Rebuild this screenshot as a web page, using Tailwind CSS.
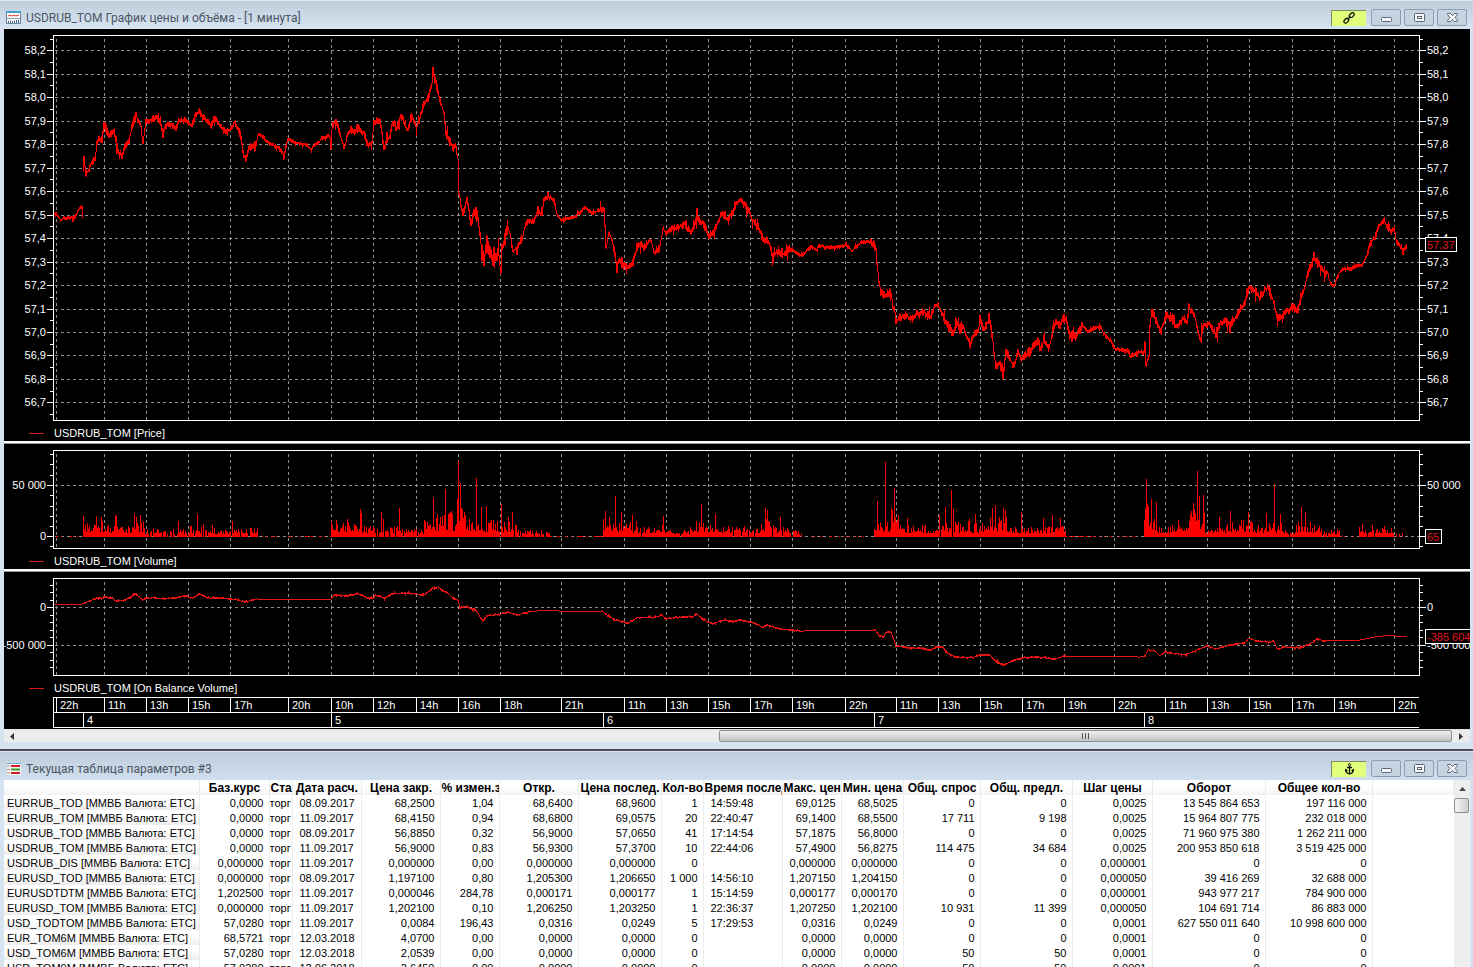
<!DOCTYPE html>
<html lang="ru">
<head>
  <meta charset="UTF-8" />
  <meta name="viewport" content="width=device-width, initial-scale=1.0"/>
  <title>USDRUB_TOM График цены и объёма</title>
  <script src="https://cdn.jsdelivr.net/npm/@tailwindcss/browser@4"></script>
</head>
<body class="h-screen flex flex-col overflow-hidden bg-[#d6e3f1] font-['Liberation_Sans',Arial,sans-serif] text-[11px] text-black">

  <!-- chart window -->
  <section class="border-t border-[#e4edf6] pb-[7px]">
    <header class="h-7 flex items-center gap-[5px] pl-1.5 pr-1.5 pt-[5px] bg-linear-to-b from-[#bfcddb] to-[#d7e4f2]">
      <svg class="w-[15px] h-[13px] shrink-0" viewBox="0 0 15 13">
        <rect x=".5" y=".5" width="14" height="12" fill="#fff" stroke="#6d86a0"/>
        <path d="M0 1h15" stroke="#3f9fd0" stroke-width="2"/>
        <path d="M2 5l2-1 2 1 2-1 2 1 3-1" fill="none" stroke="#c33"/>
        <path d="M1 7.5h13" stroke="#8aa0b5"/>
        <path d="M2.500 12v-2M4.500 12V9.500M6.500 12v-2M8.500 12V9.500M10.500 12v-3M12.500 12v-3" stroke="#445f80"/>
      </svg>
      <h1 class="flex-1 truncate font-[Roboto,'Noto_Sans',sans-serif] text-xs text-[#4b5563]">USDRUB_TOM График цены и объёма - [1 минута]</h1>
      <div class="flex items-center gap-[3px]">
        <button type="button" aria-label="Связать" class="w-[35px] h-4 mr-0.5 flex items-center justify-center bg-[#e1ff7b] border-t border-l border-[#7e8b62]">
          <svg class="w-3 h-3" viewBox="0 0 12 12" fill="none" stroke="#111" stroke-width="1.300">
            <rect x="6" y="1.500" width="5.500" height="3.400" rx="1.700" transform="rotate(-45 8.700 3.200)"/>
            <rect x=".6" y="7" width="5.500" height="3.400" rx="1.700" transform="rotate(-45 3.300 8.700)"/>
            <path d="M4.500 7.500l3-3"/>
          </svg>
        </button>
        <button type="button" aria-label="Свернуть" class="w-[30px] h-[17px] flex items-center justify-center rounded-xs border border-[#8c9db0] bg-[#c6d3e1]">
          <svg class="w-[11px] h-[9px]" viewBox="0 0 11 9"><rect x=".5" y="4.500" width="10" height="4" rx="1" fill="#f5f7fa" stroke="#5a6472"/></svg>
        </button>
        <button type="button" aria-label="Развернуть" class="w-[30px] h-[17px] flex items-center justify-center rounded-xs border border-[#8c9db0] bg-[#c6d3e1]">
          <svg class="w-[11px] h-[9px]" viewBox="0 0 11 9"><rect x=".5" y=".5" width="10" height="8" rx="1" fill="#f5f7fa" stroke="#5a6472"/><rect x="3.500" y="3.500" width="4" height="2" fill="#fff" stroke="#5a6472"/></svg>
        </button>
        <button type="button" aria-label="Закрыть" class="w-[30px] h-[17px] flex items-center justify-center rounded-xs border border-[#8c9db0] bg-[#c6d3e1]">
          <svg class="w-[11px] h-[9px]" viewBox="0 0 11 9"><path d="M.5.500h3l2 2.200 2-2.200h3v1L8 4.500l2.500 3v1h-3l-2-2.200-2 2.200h-3v-1L3 4.500.5 1.500z" fill="#f5f7fa" stroke="#5a6472"/></svg>
        </button>
      </div>
    </header>

    <div class="ml-1 mr-[3px]">
      <div class="bg-black text-white">
        <div class="flex pt-1.5" id="price"></div>
        <div class="h-5 pt-1 pl-[25px] flex items-center"><i class="w-[15px] h-px mr-2.5 bg-[#d01818]"></i>USDRUB_TOM [Price]</div>
      </div>
      <div class="h-[3px] bg-white border-b border-[#9a9a9a]"></div>
      <div class="bg-black text-white">
        <div class="flex pt-1.5" id="volume"></div>
        <div class="h-5 pt-1 pl-[25px] flex items-center"><i class="w-[15px] h-px mr-2.5 bg-[#d01818]"></i>USDRUB_TOM [Volume]</div>
      </div>
      <div class="h-[3px] bg-white border-b border-[#9a9a9a]"></div>
      <div class="bg-black text-white pb-px">
        <div class="flex pt-1.5" id="obv"></div>
        <div class="h-[21px] pt-1 pl-[25px] flex items-center"><i class="w-[15px] h-px mr-2.5 bg-[#d01818]"></i>USDRUB_TOM [On Balance Volume]</div>
        <div class="ml-[49px] mr-[51px] border-y border-l border-white">
          <div id="hours" class="h-[15px] leading-[14px] grid grid-cols-[2fr_48fr_42fr_42fr_42fr_58fr_43fr_42fr_43fr_42fr_42fr_61fr_63fr_42fr_42fr_42fr_42fr_53fr_51fr_42fr_42fr_42fr_42fr_50fr_51fr_42fr_42fr_43fr_42fr_60fr_25fr] border-b border-white"></div>
          <div id="days" class="h-3.5 leading-[14px] grid grid-cols-[29fr_248fr_272fr_271fr_270fr_275fr]"></div>
        </div>
      </div>
      <div class="h-3 mt-px flex items-center bg-[#ececec]">
        <button type="button" aria-label="Влево" class="w-4 h-3 flex items-center justify-center"><svg class="w-1 h-[7px]" viewBox="0 0 4 7"><path d="M4 0v7L0 3.500z" fill="#333"/></svg></button>
        <div class="flex-1 h-full flex justify-end">
          <div class="w-[51.2%] h-full flex items-center justify-center gap-0.5 rounded-xs border border-[#8f8f8f] bg-linear-to-b from-[#f1f1f1] to-[#c2c2c5]">
            <i class="w-px h-1.5 bg-[#555]"></i><i class="w-px h-1.5 bg-[#555]"></i><i class="w-px h-1.5 bg-[#555]"></i>
          </div>
        </div>
        <button type="button" aria-label="Вправо" class="w-[18px] h-3 flex items-center justify-center"><svg class="w-1 h-[7px]" viewBox="0 0 4 7"><path d="M0 0v7l4-3.500z" fill="#333"/></svg></button>
      </div>
    </div>
  </section>

  <!-- quotes window -->
  <section class="flex-1 min-h-0 flex flex-col border-t-2 border-[#4c5058]">
    <header class="h-[29px] shrink-0 flex items-center gap-[5px] pl-[7px] pr-1.5 pt-[5px] border-t border-[#dbe6f1] bg-linear-to-b from-[#bfcddb] to-[#d0dfee]">
      <svg class="w-3.5 h-3 shrink-0" viewBox="0 0 14 12">
        <path d="M0 0h14v12H0z" fill="#f4f4f4"/>
        <path d="M0 .5h14" stroke="#6ab0d8"/>
        <path d="M0 3h3M0 6.500h3M0 10h3" stroke="#c08878"/>
        <path d="M4 3h9M4 10h9" stroke="#d0202c" stroke-width="2"/>
        <path d="M4 6.500h9" stroke="#3a9a30" stroke-width="2"/>
      </svg>
      <h2 class="flex-1 truncate font-[Roboto,'Noto_Sans',sans-serif] text-xs text-[#4b5563]">Текущая таблица параметров #3</h2>
      <div class="flex items-center gap-[3px]">
        <button type="button" aria-label="Закрепить" class="w-[35px] h-4 mr-0.5 flex items-center justify-center bg-[#e1ff7b] border-t border-l border-[#7e8b62]">
          <svg class="w-[9px] h-3" viewBox="0 0 9 12" fill="none" stroke="#111">
            <circle cx="4.500" cy="1.600" r="1.100"/>
            <path d="M4.500 2.700V11M2 4.500h5" stroke-width="1.300"/>
            <path d="M.7 6.500c0 2.500 1.300 4 3.800 4.500 2.500-.5 3.800-2 3.800-4.500M0 8.200l.8-1.700L2.300 8M9 8.200l-.8-1.700L6.700 8" stroke-width="1.200"/>
          </svg>
        </button>
        <button type="button" aria-label="Свернуть" class="w-[30px] h-[17px] flex items-center justify-center rounded-xs border border-[#8c9db0] bg-[#c6d3e1]">
          <svg class="w-[11px] h-[9px]" viewBox="0 0 11 9"><rect x=".5" y="4.500" width="10" height="4" rx="1" fill="#f5f7fa" stroke="#5a6472"/></svg>
        </button>
        <button type="button" aria-label="Развернуть" class="w-[30px] h-[17px] flex items-center justify-center rounded-xs border border-[#8c9db0] bg-[#c6d3e1]">
          <svg class="w-[11px] h-[9px]" viewBox="0 0 11 9"><rect x=".5" y=".5" width="10" height="8" rx="1" fill="#f5f7fa" stroke="#5a6472"/><rect x="3.500" y="3.500" width="4" height="2" fill="#fff" stroke="#5a6472"/></svg>
        </button>
        <button type="button" aria-label="Закрыть" class="w-[30px] h-[17px] flex items-center justify-center rounded-xs border border-[#8c9db0] bg-[#c6d3e1]">
          <svg class="w-[11px] h-[9px]" viewBox="0 0 11 9"><path d="M.5.500h3l2 2.200 2-2.200h3v1L8 4.500l2.500 3v1h-3l-2-2.200-2 2.200h-3v-1L3 4.500.5 1.500z" fill="#f5f7fa" stroke="#5a6472"/></svg>
        </button>
      </div>
    </header>
    <div class="flex-1 min-h-0 ml-1 mr-[3px] flex bg-white overflow-hidden">
      <div class="flex-1 min-w-0 overflow-hidden">
        <table class="w-full table-fixed border-collapse whitespace-nowrap">
          <colgroup>
            <col class="w-[195px]"><col class="w-[70px]"><col class="w-[23px]"><col class="w-[69px]"><col class="w-[79px]"><col class="w-[59px]">
            <col class="w-[79px]"><col class="w-[83px]"><col class="w-[42px]"><col class="w-[79px]"><col class="w-[59px]"><col class="w-[62px]">
            <col class="w-[77px]"><col class="w-[92px]"><col class="w-[80px]"><col class="w-[113px]"><col class="w-[107px]"><col>
          </colgroup>
          <thead><tr id="head" class="bg-linear-to-b from-white via-white to-[#f1f2f4]"></tr></thead>
          <tbody id="rows"></tbody>
        </table>
      </div>
      <div class="w-4 bg-[#eeeeee]">
        <button type="button" aria-label="Вверх" class="w-full h-[18px] flex items-center justify-center"><svg class="w-[7px] h-1" viewBox="0 0 7 4"><path d="M0 4h7L3.500 0z" fill="#444"/></svg></button>
        <div class="w-[15px] h-[15px] border border-[#8f8f8f] rounded-xs bg-linear-to-r from-[#f5f5f5] to-[#cfcfd1]"></div>
      </div>
    </div>
  </section>

  <script>
// x positions of the hour grid, from the left edge of the time scale
const HOURS = [56,104,146,188,230,288,331,373,416,458,500,561,624,666,708,750,792,845,896,938,980,1022,1064,1114,1165,1207,1249,1292,1334,1394];
const LABELS = '22h 11h 13h 15h 17h 20h 10h 12h 14h 16h 18h 21h 11h 13h 15h 17h 19h 22h 11h 13h 15h 17h 19h 22h 11h 13h 15h 17h 19h 22h'.split(' ');

let seed = 11;
function rnd() {
  seed = (seed * 16807) % 2147483647;
  return seed / 2147483647;
}

function parse(s) {
  return s.trim().split(/\s+/).map(p => p.split(',').map(Number));
}

function linePath(points, noise) {
  let d = '', side = 1;
  for (let i = 0; i < points.length - 1; i++) {
    const [x0, y0] = points[i], [x1, y1] = points[i + 1];
    for (let x = x0; x < x1; x += 0.6) {
      const y = y0 + (y1 - y0) * (x - x0) / (x1 - x0);
      side = -side;
      const n = side * noise(x) * (0.15 + rnd() * (rnd() > 0.88 ? 2.2 : 0.9));
      d += (d ? 'L' : 'M') + x.toFixed(1) + ' ' + (y + n).toFixed(1);
    }
  }
  const last = points[points.length - 1];
  return d + 'L' + last[0] + ' ' + last[1];
}

function panel(id, o) {
  const h = o.bottom - o.top + 1;
  let left = '', right = '', grid = '';
  o.major.forEach(([y, label]) => {
    const py = y + 0.5;
    left += `<path d="M43 ${py}h6" stroke="#fff"/><text x="42" y="${y + 4}" text-anchor="end">${label}</text>`;
    right += `<path d="M0 ${py}h6" stroke="#fff"/><text x="7" y="${y + 4}">${label}</text>`;
    grid += `<path d="M55 ${py}H1419"/>`;
  });
  o.minor.forEach(y => {
    left += `<path d="M46 ${y + 0.5}h3" stroke="#fff"/>`;
    right += `<path d="M0 ${y + 0.5}h3" stroke="#fff"/>`;
  });
  HOURS.forEach(x => { grid += `<path d="M${x + 0.5} ${o.top + 4}V${o.bottom}"/>`; });
  const [by, bt, bw] = o.last;
  right += `<rect x="5.500" y="${by - 7.5}" width="${bw}" height="14" fill="#000" stroke="#fff"/><text x="7" y="${by + 4}" class="fill-[#e0141e]">${bt}</text>`;
  document.getElementById(id).innerHTML = `
    <svg class="w-[49px] shrink-0 fill-white" style="height:${h}px" viewBox="0 ${o.top} 49 ${h}">${left}</svg>
    <svg class="flex-1 min-w-0" style="height:${h}px" viewBox="53 ${o.top} 1367 ${h}" preserveAspectRatio="none" fill="none">
      <g stroke="#8f8f8f" stroke-dasharray="3 3" shape-rendering="crispEdges">${grid}</g>
      <path d="${o.path}" stroke="${o.color}" shape-rendering="crispEdges"/>
      <rect x="53.500" y="${o.top + 0.5}" width="1366" height="${h - 1}" stroke="#fff"/>
    </svg>
    <svg class="w-[50px] shrink-0 fill-white" style="height:${h}px" viewBox="0 ${o.top} 50 ${h}">${right}</svg>`;
}

// price
const before = parse('54,213 58,216 61,221 65,218 73,218 77,214 80,208 82,207 83,218');
const price = parse(`83,176 83.5,154 84,160 86,173 89,170 92,162 95,160 97,145 99,138 102,140 104,126 106,130 110,135 114,133 116,140 118,152
122,156 126,146 129,141 133,124 136,115 138,120 141,128 143,143 146,122 150,120 157,118 160,122 163,134 166,125 172,125 177,128 179,120 186,121
192,126 196,115 199,111 202,116 208,122 211,126 215,118 221,126 227,133 232,128 235,122 240,135 244,155 246,158 249,147 256,145 258,135 262,136
267,142 275,146 279,148 284,155 288,139 292,141 300,144 305,144 311,149 316,144 325,137 330,136 331,148 332,125 336,120 340,133 344,150 348,132
352,132 358,129 364,133 367,144 372,146 374,121 380,120 384,147 390,135 393,122 397,128 401,115 405,125 408,130 412,115 416,127 420,118 424,104
428,98 432,85 433,70 435,80 437,88 441,103 444,113 446,135 450,140 453,148 456,147 458,158 459,190 461,205 463,212 467,201 470,215 471,225
474,213 478,215 480,230 482,250 484,260 487,243 490,252 494,262 498,250 501,272 502,250 506,233 508,225 511,240 513,252 517,248 522,240 525,227
529,220 533,222 538,212 542,213 544,199 548,197 554,200 557,214 561,220 567,219 575,217 581,212 585,207 592,213 600,210 604,209 605,225 606,250
609,230 613,245 616,258 617,272 618,260 622,264 628,268 634,260 638,244 645,247 651,240 654,253 660,248 663,228 666,234 672,229 678,228 685,224
691,233 697,218 703,223 709,235 713,232 718,223 722,213 727,219 732,214 736,203 741,200 746,207 750,213 754,223 758,226 763,240 768,240 773,256
778,252 782,255 790,249 795,252 802,256 808,250 812,247 816,250 819,245 825,248 832,247 838,247 846,245 852,251 858,245 865,241 872,243 876,247
877,262 879,282 881,292 885,296 889,292 891,293 893,305 896,320 900,318 906,315 911,320 916,314 923,311 928,316 931,318 935,305 938,305 942,313
945,320 950,328 953,335 957,325 963,326 966,334 970,345 974,335 979,330 980,318 984,330 989,320 992,330 994,350 996,368 1000,362 1003,376
1006,352 1010,358 1014,368 1018,350 1021,360 1026,355 1033,347 1038,342 1041,348 1045,340 1049,350 1052,335 1056,322 1060,327 1063,318 1066,318
1069,332 1076,337 1082,325 1088,332 1095,328 1101,327 1105,335 1110,340 1115,349 1121,350 1127,350 1131,357 1137,352 1144,353 1145,345 1146,367
1149,355 1150,330 1152,310 1156,320 1161,333 1166,315 1172,320 1177,327 1183,318 1187,323 1189,304 1191,312 1194,314 1197,326 1200,340 1204,325
1209,323 1216,335 1221,322 1231,323 1238,313 1244,305 1249,287 1255,291 1260,298 1265,290 1269,287 1271,295 1274,303 1277,317 1281,318 1286,312
1292,308 1298,309 1303,293 1307,275 1310,268 1314,258 1318,263 1323,270 1328,273 1331,285 1335,286 1338,275 1342,269 1350,269 1357,266 1362,266
1367,255 1371,243 1375,237 1379,226 1384,221 1387,225 1391,232 1394,228 1397,243 1400,246 1403,250 1407,245`);
function priceNoise(x) {
  if ((x > 256 && x < 331) || (x > 555 && x < 600) || (x > 790 && x < 870) || (x > 1082 && x < 1143) || (x > 1325 && x < 1368)) return 2;
  if ((x > 140 && x < 235) || (x > 508 && x < 556) || x > 1367) return 3.5;
  if (x > 475 && x < 508) return 8;
  return 4.5;
}
panel('price', {
  top: 35, bottom: 420, color: '#ff0000',
  major: [50,74,97,121,144,168,191,215,238,262,285,309,332,355,379,402].map((y, i) => [y, ((582 - i) / 10).toFixed(1).replace('.', ',')]),
  minor: [39,62,85,109,132,156,179,203,226,250,273,297,320,344,367,391,414],
  last: [245, '57,37', 31],
  path: linePath(before, () => 1.8) + linePath(price, priceNoise),
});

// volume: [from, to, typical height, share of empty minutes]
const dense = [[54,83,1,.7],[83,104,13,0],[104,120,10,0],[120,133,8,0],[133,145,15,0],[145,190,6,.1],[190,215,9,.1],[215,232,5,.2],[232,258,8,.1],[258,331,1,.75],
[331,360,13,0],[360,380,8,.1],[380,398,12,.1],[398,425,6,.1],[425,456,20,0],[456,466,34,0],[466,500,14,0],[500,520,13,.1],[520,550,4,.2],[550,603,1,.6],[603,615,16,0],
[615,640,12,0],[640,650,8,.1],[650,666,9,0],[666,690,5,.1],[690,705,13,0],[705,760,9,.1],[760,770,15,0],[770,790,10,.1],[790,802,4,.2],[802,874,1,.75],[874,880,24,0],
[880,890,12,0],[890,900,24,0],[900,936,9,0],[936,960,12,.1],[960,985,12,0],[985,1008,18,0],[1008,1025,10,0],[1025,1066,8,0],[1066,1144,1,.65],[1144,1156,26,0],
[1156,1175,9,0],[1175,1188,8,0],[1188,1205,26,0],[1205,1218,6,0],[1218,1232,12,0],[1232,1253,13,0],[1253,1282,11,0],[1282,1296,5,.1],[1296,1322,12,0],[1322,1340,6,.2],[1340,1359,1,.8],[1359,1393,8,.1],[1393,1407,2,.6]];
const spikes = parse(`83,516 96,516 101,517 115,515 116,516 134,514 136,517 140,515 178,521 197,514 203,524 232,521 331,521 336,520 347,519 360,509 361,513 381,512 383,519
399,508 424,520 433,498 437,514 445,489 451,511 458,461 460,483 476,478 481,507 486,506 501,504 508,517 512,512 605,511 609,517 615,496 621,512 632,515
663,516 701,504 715,514 765,508 767,510 780,517 877,501 885,462 892,510 894,488 898,515 907,518 939,515 945,507 951,490 953,509 969,519 975,514 992,508
995,505 1003,508 1005,510 1021,512 1043,518 1052,515 1060,518 1146,479 1147,504 1151,499 1156,502 1178,520 1191,511 1193,503 1197,471 1199,496 1203,495
1219,517 1230,511 1248,512 1266,513 1274,484 1280,514 1301,507 1305,512 1310,522 1362,524 1372,525`);
let bars = '';
dense.forEach(([a, b, h, skip]) => {
  for (let x = a; x < b; x++) {
    if (rnd() < skip) continue;
    const v = h < 2 ? 1 : Math.round(2 + h * (0.2 + 0.95 * Math.pow(rnd(), 1.7)));
    bars += `M${x + 0.5} 537v-${v}`;
  }
});
spikes.forEach(([x, y]) => { bars += `M${x + 0.5} 537V${y}`; });
panel('volume', {
  top: 450, bottom: 548, color: '#ff0000',
  major: [[485, '50 000'], [536, '0']],
  minor: [454,464,475,495,506,516,526,546],
  last: [537, '65', 16],
  path: bars,
});

// on balance volume
const obv = parse(`54,604 82,604 84,603 90,601 96,598 101,598 105,597 112,598 117,601 125,600 131,597 135,593 139,597 143,600 147,598 155,598 163,599 175,598 184,596
193,598 199,594 208,598 220,598 230,599 238,600 245,602 256,599 331,599 335,595 345,596 357,594 362,595 367,598 374,598 375,595 385,598 392,594 405,593
416,594 424,595 432,589 438,587 443,591 448,593 453,598 458,600 460,608 465,606 472,609 477,611 480,617 483,621 487,616 500,614 508,612 517,615 529,612
545,610 560,611 602,611 607,615 615,620 628,623 637,618 655,617 662,615 666,619 680,617 692,617 697,614 702,619 713,624 723,620 733,622 740,620 755,623
763,628 767,625 780,629 800,631 875,630 880,636 884,637 886,632 891,632 896,646 910,648 920,648 930,650 937,647 943,647 946,652 955,657 970,658 980,655
990,655 995,661 1004,665 1012,661 1022,658 1035,657 1055,659 1064,656 1100,656 1140,657 1145,656 1148,650 1155,651 1160,656 1165,652 1185,655 1195,651
1207,646 1216,649 1230,645 1245,643 1249,638 1256,641 1270,642 1274,641 1277,649 1285,647 1300,648 1310,644 1317,639 1325,641 1360,640 1375,637 1390,635
1395,636 1407,637`);
function obvNoise(x) {
  return (x < 84 || (x > 256 && x < 331) || (x > 530 && x < 602) || (x > 800 && x < 875) || (x > 1066 && x < 1144) || x > 1325) ? 0 : 0.6;
}
panel('obv', {
  top: 578, bottom: 675, color: '#e81414',
  major: [[607, '0'], [645, '-500 000']],
  minor: [585,592,600,615,622,630,637,652,660,667],
  last: [637, '-385 604', 60],
  path: linePath(obv, obvNoise),
});

document.getElementById('hours').innerHTML = '<span></span>' +
  LABELS.map(t => `<span class="min-w-0 pl-[3px] border-l border-white">${t}</span>`).join('');
document.getElementById('days').innerHTML = '<span></span>' +
  [4, 5, 6, 7, 8].map(t => `<span class="pl-[3px] border-l border-white">${t}</span>`).join('');

// quotes table
const heads = ['', 'Баз.курс', 'Статус', 'Дата расч.', 'Цена закр.', '% измен.закр.', 'Откр.', 'Цена послед.', 'Кол-во', 'Время послед.', 'Макс. цена', 'Мин. цена', 'Общ. спрос', 'Общ. предл.', 'Шаг цены', 'Оборот', 'Общее кол-во', ''];
const data = `
EURRUB_TOD|0,0000|08.09.2017|68,2500|1,04|68,6400|68,9600|1|14:59:48|69,0125|68,5025|0|0|0,0025|13 545 864 653|197 116 000
EURRUB_TOM|0,0000|11.09.2017|68,4150|0,94|68,6800|69,0575|20|22:40:47|69,1400|68,5500|17 711|9 198|0,0025|15 964 807 775|232 018 000
USDRUB_TOD|0,0000|08.09.2017|56,8850|0,32|56,9000|57,0650|41|17:14:54|57,1875|56,8000|0|0|0,0025|71 960 975 380|1 262 211 000
USDRUB_TOM|0,0000|11.09.2017|56,9000|0,83|56,9300|57,3700|10|22:44:06|57,4900|56,8275|114 475|34 684|0,0025|200 953 850 618|3 519 425 000
USDRUB_DIS|0,000000|11.09.2017|0,000000|0,00|0,000000|0,000000|0||0,000000|0,000000|0|0|0,000001|0|0
EURUSD_TOD|0,000000|08.09.2017|1,197100|0,80|1,205300|1,206650|1 000|14:56:10|1,207150|1,204150|0|0|0,000050|39 416 269|32 688 000
EURUSDTDTM|1,202500|11.09.2017|0,000046|284,78|0,000171|0,000177|1|15:14:59|0,000177|0,000170|0|0|0,000001|943 977 217|784 900 000
EURUSD_TOM|0,000000|11.09.2017|1,202100|0,10|1,206250|1,203250|1|22:36:37|1,207250|1,202100|10 931|11 399|0,000050|104 691 714|86 883 000
USD_TODTOM|57,0280|11.09.2017|0,0084|196,43|0,0316|0,0249|5|17:29:53|0,0316|0,0249|0|0|0,0001|627 550 011 640|10 998 600 000
EUR_TOM6M|68,5721|12.03.2018|4,0700|0,00|0,0000|0,0000|0||0,0000|0,0000|0|0|0,0001|0|0
USD_TOM6M|57,0280|12.03.2018|2,0539|0,00|0,0000|0,0000|0||0,0000|0,0000|50|50|0,0001|0|0
USD_TOM9M|57,0280|12.06.2018|2,6450|0,00|0,0000|0,0000|0||0,0000|0,0000|50|50|0,0001|0|0`;

document.getElementById('head').innerHTML = heads.map(t =>
  `<th scope="col" class="h-[15px] p-0 pl-px pt-px overflow-hidden text-xs leading-[14px] font-bold border-r border-[#ececec]">${t}</th>`).join('');
document.getElementById('rows').innerHTML = data.trim().split('\n').map(line => {
  const c = line.split('|');
  c.splice(2, 0, 'торг');
  return '<tr>' + c.map((t, i) => {
    if (i === 0) return `<th scope="row" class="h-[15px] p-0 pl-[3px] pt-px text-left font-normal leading-[14px] border-r border-[#ececec] bg-linear-to-b from-white from-40% to-[#ededed]">${t} [ММВБ Валюта: ЕТС]</th>`;
    if (i === 2) return `<td class="p-0 pt-px overflow-hidden leading-[14px] border-r border-[#ececec]">${t}</td>`;
    if (i === 3 || i === 9) return `<td class="p-0 pl-[7px] pt-px leading-[14px] border-r border-[#ececec]">${t}</td>`;
    return `<td class="p-0 pr-[5px] pt-px text-right leading-[14px] border-r border-[#ececec]">${t}</td>`;
  }).join('') + '<td></td></tr>';
}).join('');
  </script>
</body>
</html>
